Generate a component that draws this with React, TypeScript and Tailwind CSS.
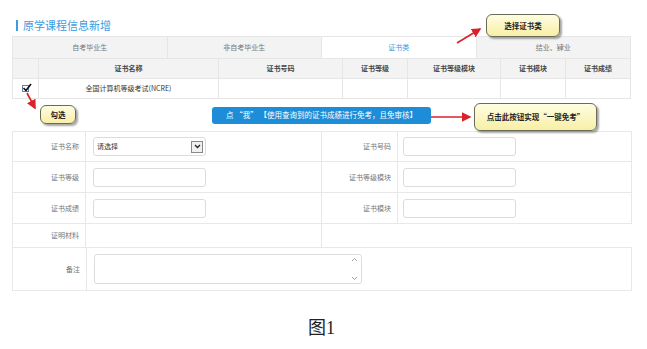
import React from 'react';

const tabs = ['自考毕业生', '非自考毕业生', '证书类', '结业、肄业'];
const cols = [
    { label: '证书名称', w: 'w-[180px]' },
    { label: '证书号码', w: 'w-[124px]' },
    { label: '证书等级', w: 'w-[65px]' },
    { label: '证书等级模块', w: 'w-[93px]' },
    { label: '证书模块', w: 'w-[65px]' },
    { label: '证书成绩', w: 'flex-1' },
];

function Callout({ text, className }: { text: string; className: string }) {
    return (
        <div className={`absolute flex items-center justify-center rounded-[6px] border border-[#6b6b5a] bg-gradient-to-b from-[#fffde0] to-[#f7efa6] text-[7.5px] font-bold text-[#222] shadow-[2px_2px_2px_rgba(0,0,0,0.35)] ${className}`}>
            {text}
        </div>
    );
}

function TextInput({ select }: { select?: boolean }) {
    return (
        <div className="flex h-[19px] w-[113px] items-center justify-between rounded-[3px] border border-[#dcdcdc] bg-white pl-[3px] pr-[2px]">
            {select && (
                <>
                    <span className="text-[7px] text-[#333]">请选择</span>
                    <span className="flex h-[12px] w-[12px] items-center justify-center border border-[#888] bg-[#f0f0f0]">
                        <svg width="7" height="5" viewBox="0 0 7 5"><path d="M1 1 L3.5 3.5 L6 1" stroke="#222" strokeWidth="1.3" fill="none" /></svg>
                    </span>
                </>
            )}
        </div>
    );
}

function Label({ text, w }: { text: string; w: string }) {
    return (
        <div className={`${w} flex items-center justify-end border-r border-[#e8e8e8] pr-[6px] text-[7px] text-[#777]`}>
            {text}
        </div>
    );
}

function FormRow({ l1, l2, select, first }: { l1: string; l2: string; select?: boolean; first?: boolean }) {
    return (
        <div className={`flex h-[31px] border-x border-b border-[#e8e8e8] ${first ? 'border-t' : ''}`}>
            <Label text={l1} w="w-[73px]" />
            <div className="flex w-[236px] items-center border-r border-[#e8e8e8] pl-[7px]">
                <TextInput select={select} />
            </div>
            <Label text={l2} w="w-[76px]" />
            <div className="flex flex-1 items-center pl-[5px]">
                <TextInput />
            </div>
        </div>
    );
}

export default function App() {
    return (
        <div className="relative h-[349px] w-[647px] overflow-hidden bg-white font-['Noto_Sans_CJK_SC',sans-serif]">
            <div className="pl-[12px] pr-[16px] pt-[17px]">
                <div className="flex h-[17px] items-center gap-[5px] pl-[4px] text-[11px] text-[#3d9be0]">
                    <span className="h-[11px] w-[2px] bg-[#3d9be0]" />
                    原学课程信息新增
                </div>
                <div className="mt-[2px] flex h-[23px] border border-[#e6e6e6] bg-[#f3f3f3]">
                    {tabs.map((t, i) => (
                        <div
                            key={t}
                            className={`flex flex-1 items-center justify-center text-[7px] ${i < 3 ? 'border-r border-[#e6e6e6]' : ''} ${i === 2 ? 'bg-white text-[#3d9be0]' : 'text-[#777]'}`}
                        >
                            {t}
                        </div>
                    ))}
                </div>
                <div className="flex h-[20px] border-x border-b border-[#e6e6e6] bg-[#f3f3f3]">
                    <div className="w-[26px] border-r border-[#e6e6e6]" />
                    {cols.map((c, i) => (
                        <div key={c.label} className={`${c.w} flex items-center justify-center text-[7px] font-semibold text-[#444] ${i < cols.length - 1 ? 'border-r border-[#e6e6e6]' : ''}`}>
                            {c.label}
                        </div>
                    ))}
                </div>
                <div className="flex h-[20px] border-x border-b border-[#e6e6e6]">
                    <div className="flex w-[26px] items-center justify-center border-r border-[#e6e6e6]">
                        <span className="relative h-[7px] w-[7px] border border-[#6a7fa8] bg-white">
                            <svg className="absolute left-[-1px] top-[-3px]" width="10" height="9" viewBox="0 0 10 9"><path d="M1.5 5 L4 7.5 L9 1" stroke="#111" strokeWidth="1.6" fill="none" /></svg>
                        </span>
                    </div>
                    {cols.map((c, i) => (
                        <div key={c.label} className={`${c.w} flex items-center justify-center text-[7px] text-[#333] ${i < cols.length - 1 ? 'border-r border-[#e6e6e6]' : ''}`}>
                            {i === 0 ? '全国计算机等级考试(NCRE)' : ''}
                        </div>
                    ))}
                </div>

                <div className="flex h-[32px] items-center pl-[200px]">
                    <button className="flex h-[17px] w-[219px] items-center justify-center rounded-[3px] bg-[#1c8dd6] text-[7.5px] text-white">
                        点 “我” 【使用查询到的证书成绩进行免考，且免审核】
                    </button>
                </div>

                <div className="w-[620px]">
                    <FormRow l1="证书名称" l2="证书号码" select first />
                    <FormRow l1="证书等级" l2="证书等级模块" />
                    <FormRow l1="证书成绩" l2="证书模块" />
                    <div className="flex h-[24px] w-[310px] border-x border-b border-[#e8e8e8]">
                        <Label text="证明材料" w="w-[73px]" />
                    </div>
                    <div className="-mt-px flex h-[44px] border border-[#e8e8e8]">
                        <div className="flex w-[73px] items-center justify-end pr-[6px] text-[7px] text-[#777]">备注</div>
                        <div className="flex flex-1 items-center border-l border-[#e8e8e8] pl-[7px]">
                            <div className="flex h-[30px] w-[268px] flex-col items-end justify-between rounded-[3px] border border-[#dcdcdc] py-[2px] pr-[3px]">
                                <svg width="7" height="5" viewBox="0 0 7 5"><path d="M1 4 L3.5 1.5 L6 4" stroke="#999" strokeWidth="0.9" fill="none" /></svg>
                                <svg width="7" height="5" viewBox="0 0 7 5"><path d="M1 1 L3.5 3.5 L6 1" stroke="#999" strokeWidth="0.9" fill="none" /></svg>
                            </div>
                        </div>
                    </div>
                </div>

                <div className="mt-[26px] text-center font-['Liberation_Serif','Noto_Sans_CJK_SC',serif] text-[18px] leading-[22px] text-[#222]">
                    图1
                </div>
            </div>

            {/* annotations */}
            <svg className="pointer-events-none absolute inset-0" width="647" height="349">
                <defs>
                    <marker id="ah" markerWidth="6" markerHeight="6" refX="5" refY="3" orient="auto">
                        <path d="M0 0 L6 3 L0 6 Z" fill="#d8232a" />
                    </marker>
                </defs>
                <line x1="457" y1="43" x2="480" y2="29" stroke="#d8232a" strokeWidth="1.6" markerEnd="url(#ah)" />
                <line x1="27" y1="93" x2="35" y2="108" stroke="#d8232a" strokeWidth="1.6" markerEnd="url(#ah)" />
                <line x1="431" y1="117" x2="470" y2="117" stroke="#d8232a" strokeWidth="1.6" markerEnd="url(#ah)" />
            </svg>
            <Callout text="选择证书类" className="left-[486px] top-[14px] h-[23px] w-[74px]" />
            <Callout text="勾选" className="left-[40px] top-[105px] h-[19px] w-[36px]" />
            <Callout text="点击此按钮实现“一键免考”" className="left-[474px] top-[103px] h-[28px] w-[123px]" />
        </div>
    );
}
